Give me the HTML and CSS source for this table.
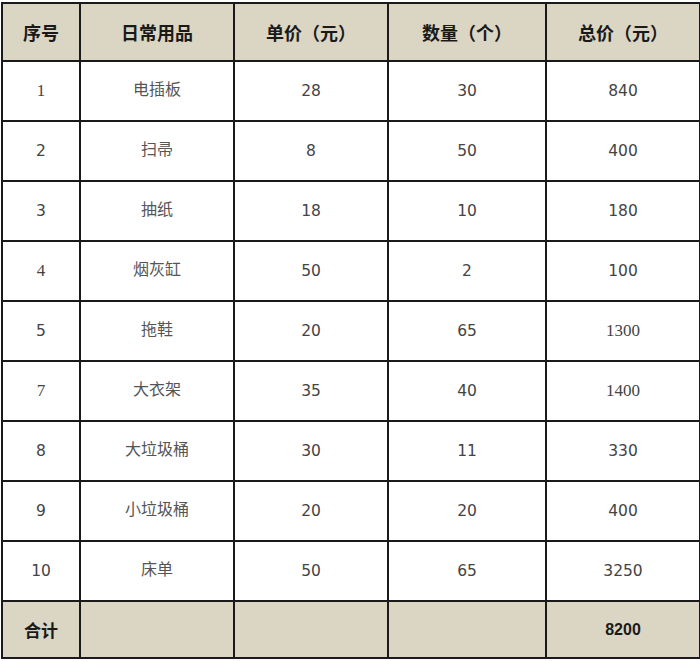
FILE: index.html
```html
<!DOCTYPE html>
<html lang="zh">
<head>
<meta charset="utf-8">
<link rel="stylesheet" href="styles.css">
</head>
<body>
<table class="sheet">
  <colgroup>
    <col class="c1"><col class="c2"><col class="c3"><col class="c4"><col class="c5">
  </colgroup>
  <thead>
    <tr class="head">
      <th>序号</th><th>日常用品</th><th>单价（元）</th><th>数量（个）</th><th>总价（元）</th>
    </tr>
  </thead>
  <tbody>
    <tr><td class="serif">1</td><td class="name">电插板</td><td>28</td><td>30</td><td>840</td></tr>
    <tr><td>2</td><td class="name">扫帚</td><td>8</td><td>50</td><td>400</td></tr>
    <tr><td>3</td><td class="name">抽纸</td><td>18</td><td>10</td><td>180</td></tr>
    <tr><td class="serif">4</td><td class="name">烟灰缸</td><td>50</td><td>2</td><td>100</td></tr>
    <tr><td>5</td><td class="name">拖鞋</td><td>20</td><td>65</td><td class="serif">1300</td></tr>
    <tr><td class="serif">7</td><td class="name">大衣架</td><td>35</td><td>40</td><td class="serif">1400</td></tr>
    <tr><td>8</td><td class="name">大垃圾桶</td><td>30</td><td>11</td><td>330</td></tr>
    <tr><td>9</td><td class="name">小垃圾桶</td><td>20</td><td>20</td><td>400</td></tr>
    <tr><td>10</td><td class="name">床单</td><td>50</td><td>65</td><td>3250</td></tr>
    <tr class="total"><th class="tlabel">合计</th><td></td><td></td><td></td><th class="tsum">8200</th></tr>
  </tbody>
</table>
</body>
</html>
```
FILE: styles.css
```css
html, body {
  margin: 0;
  padding: 0;
  background: #ffffff;
}
body {
  padding: 2px 0 0 1px;
}
.sheet {
  border-collapse: collapse;
  width: 698px;
  table-layout: fixed;
  font-family: "DejaVu Sans", "Noto Sans CJK SC", sans-serif;
  color: #444;
}
.c1 { width: 78px; }
.c2 { width: 154px; }
.c3 { width: 154px; }
.c4 { width: 158px; }
.c5 { width: 154px; }
.sheet th, .sheet td {
  border: 2px solid #1a1a1a;
  text-align: center;
  vertical-align: middle;
  padding: 0;
  height: 58px;
  line-height: 20px;
  font-size: 15.5px;
}
.head th {
  background: #dbd6c3;
  height: 56px;
  font-family: "Noto Sans CJK SC", sans-serif;
  font-weight: 700;
  font-size: 18px;
  color: #1a1a1a;
}
.sheet td.name {
  font-family: "Noto Sans CJK SC", sans-serif;
  font-size: 16px;
  font-weight: 400;
  color: #555;
  height: 52px;
  padding-bottom: 6px;
}
.sheet td.serif {
  font-family: "Liberation Serif", serif;
  font-size: 17px;
}
.total td, .total th {
  background: #dbd6c3;
  height: 55px;
}
.total th {
  font-weight: 700;
  color: #1a1a1a;
}
.total th.tlabel {
  font-family: "Noto Sans CJK SC", sans-serif;
  font-size: 17px;
}
.total th.tsum {
  font-family: "Liberation Sans", sans-serif;
  font-size: 16px;
}
```
